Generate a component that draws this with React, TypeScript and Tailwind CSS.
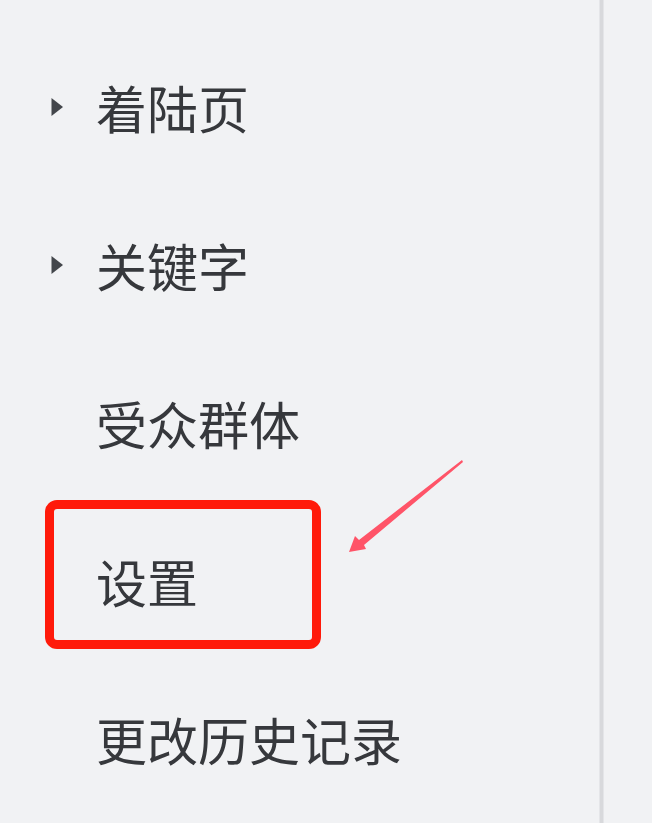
const items = [
  { label: '着陆页', caret: true },
  { label: '关键字', caret: true },
  { label: '受众群体', caret: false },
  { label: '设置', caret: false },
  { label: '更改历史记录', caret: false },
];

function Caret() {
  return (
    <svg width="14" height="22" viewBox="0 0 14 22" className="text-[#43464b]">
      <path d="M1.5 2 L13 11 L1.5 20 Z" fill="currentColor" />
    </svg>
  );
}

export default function App() {
  return (
    <div className="relative w-[652px] h-[823px] bg-[#f1f2f4] overflow-hidden flex font-['Noto_Sans_CJK_SC','Noto_Sans',sans-serif]">
      <nav className="w-[599px] pt-[28px] flex flex-col">
        {items.map((item) => (
          <div key={item.label} className="h-[158px] flex items-center">
            <div className="w-[96px] pl-[50px] flex items-center">{item.caret && <Caret />}</div>
            <span className="text-[51px] leading-none text-[#36383c]">{item.label}</span>
          </div>
        ))}
      </nav>
      <div className="w-[5px] h-full bg-[#d8d9dc] border-x border-[#e4e5e8]" />
      <div className="flex-1" />

      {/* annotation: highlight box */}
      <div className="absolute left-[45px] top-[500px] w-[276px] h-[149px] border-[9px] border-[#ff1a0a] rounded-[12px]" />

      {/* annotation: arrow */}
      <svg className="absolute left-0 top-0" width="652" height="823" viewBox="0 0 652 823">
        <polygon
          points="462,460 463,462 364,545 366,549 349,552 355,536 359,540"
          fill="#ff5468"
        />
      </svg>
    </div>
  );
}
